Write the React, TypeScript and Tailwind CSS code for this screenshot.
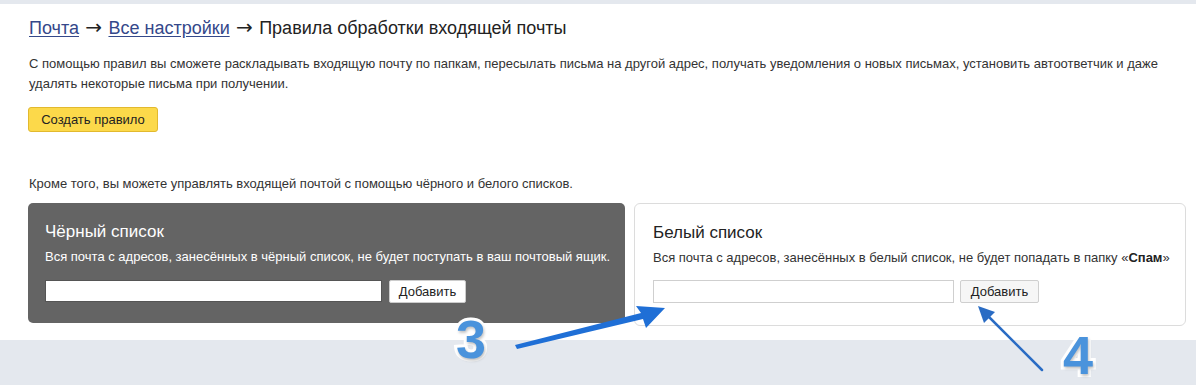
import React from 'react'

function Annotations() {
  return (
    <>
      <svg className="absolute left-0 top-0 pointer-events-none" width="1196" height="385" viewBox="0 0 1196 385">
        {/* arrow 3 */}
        <polygon points="515,345 641,313 636,306 665,308 646,328 643,319 517,349" fill="#1f6fd6" />
        {/* arrow 4 */}
        <line x1="1042" y1="370" x2="986" y2="314" stroke="#2a6cc4" strokeWidth="2.5" strokeLinecap="round" />
        <polygon points="978,306 995,312 984,323" fill="#2a6cc4" />
      </svg>
      <span className="absolute left-[456px] top-[315px] text-[54px] font-bold leading-[48px] text-[#4a93dc] [paint-order:stroke_fill] [-webkit-text-stroke:6px_white] [text-shadow:1px_2px_3px_rgba(0,0,0,0.25)]">
        3
      </span>
      <span className="absolute left-[1063px] top-[331px] text-[54px] font-bold leading-[48px] text-[#4a93dc] [paint-order:stroke_fill] [-webkit-text-stroke:6px_white] [text-shadow:1px_2px_3px_rgba(0,0,0,0.25)]">
        4
      </span>
    </>
  )
}

export default function App() {
  return (
    <div className="relative w-[1196px] h-[385px] overflow-hidden bg-[#e4e8ee] font-['Liberation_Sans',Arial,sans-serif] text-[#333]">
      <div className="mt-[4px] h-[336px] bg-white pl-[29px] pr-[10px] pt-[12px]">
        <h1 className="text-[18px] leading-[24px] text-[#222]">
          <a className="text-[#34488a] underline underline-offset-2">Почта</a>
          <span className="font-['DejaVu_Sans'] text-[20px] leading-none">{' → '}</span>
          <a className="text-[#34488a] underline underline-offset-2">Все настройки</a>
          <span className="font-['DejaVu_Sans'] text-[20px] leading-none">{' → '}</span>
          Правила обработки входящей почты
        </h1>

        <p className="mt-[14px] text-[13px] leading-[20px] w-[1140px]">
          С помощью правил вы сможете раскладывать входящую почту по папкам, пересылать письма на другой адрес, получать уведомления о новых письмах, установить автоответчик и даже удалять некоторые письма при получении.
        </p>

        <button className="mt-[13px] -ml-[1px] h-[25px] w-[130px] rounded-[3px] border border-[#e2b92e] bg-[#fcd94a] text-[13px] text-[#222]">
          Создать правило
        </button>

        <p className="mt-[42px] text-[13px] leading-[20px]">
          Кроме того, вы можете управлять входящей почтой с помощью чёрного и белого списков.
        </p>

        <div className="mt-[9px] -ml-[1px] flex gap-[9px] items-start">
          <div className="w-[597px] h-[120px] rounded-[5px] bg-[#646464] pl-[17px] pt-[18px] text-white">
            <div className="text-[17px] leading-[22px]">Чёрный список</div>
            <div className="mt-[5px] text-[13px] leading-[18px]">
              Вся почта с адресов, занесённых в чёрный список, не будет поступать в ваш почтовый ящик.
            </div>
            <div className="mt-[14px] flex gap-[7px]">
              <input className="h-[22px] w-[337px] bg-white border border-[#555] outline-none" />
              <button className="h-[23px] w-[77px] rounded-[2px] bg-white border border-[#ccc] text-[13px] text-[#222]">
                Добавить
              </button>
            </div>
          </div>

          <div className="w-[552px] h-[123px] rounded-[6px] border border-[#dcdcdc] bg-white pl-[18px] pt-[18px]">
            <div className="text-[17px] leading-[22px] text-[#222]">Белый список</div>
            <div className="mt-[5px] text-[13px] leading-[18px] text-[#333]">
              Вся почта с адресов, занесённых в белый список, не будет попадать в папку «<b className="text-[#222]">Спам</b>»
            </div>
            <div className="mt-[13px] flex gap-[6px]">
              <input className="h-[23px] w-[301px] bg-white border border-[#cfcfcf] outline-none" />
              <button className="h-[23px] w-[79px] rounded-[2px] bg-[#f6f6f6] border border-[#cfcfcf] text-[13px] text-[#222]">
                Добавить
              </button>
            </div>
          </div>
        </div>
      </div>
      <Annotations />
    </div>
  )
}
